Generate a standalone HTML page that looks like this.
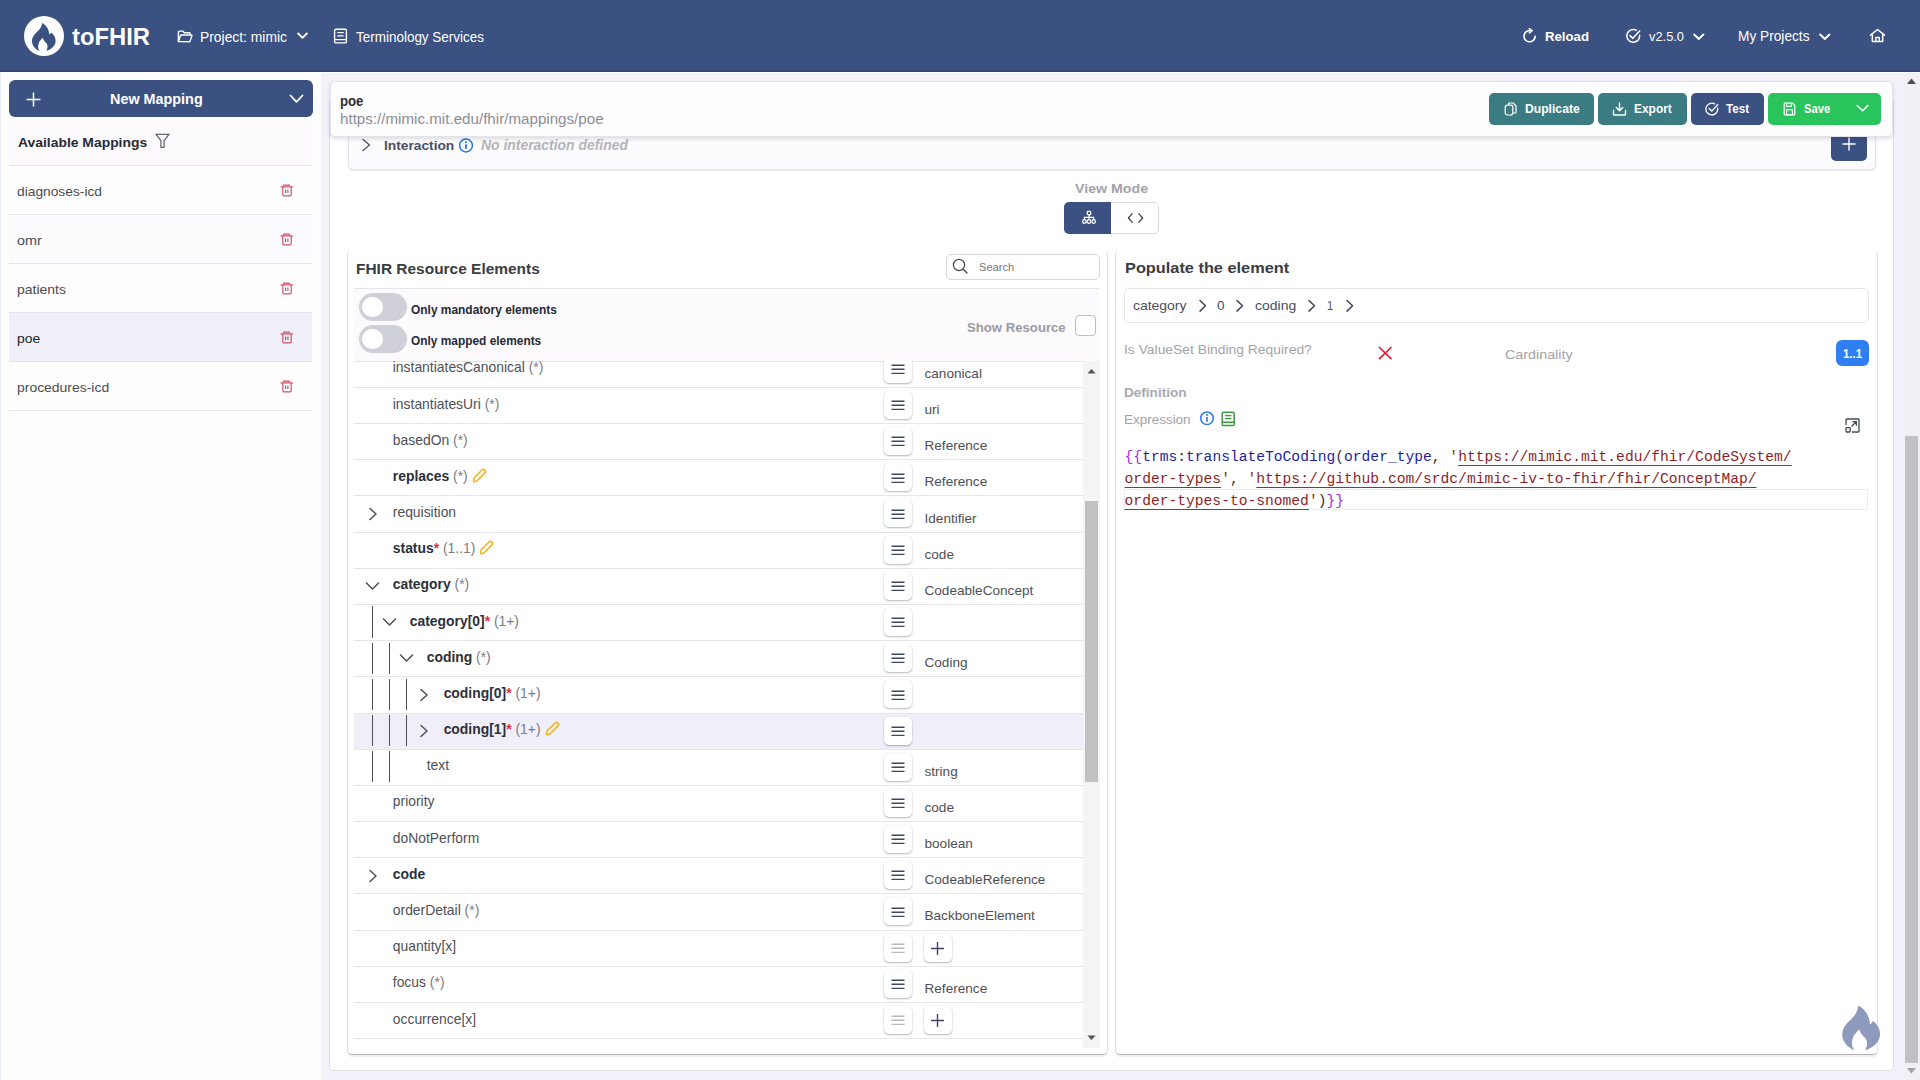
<!DOCTYPE html><html><head><meta charset="utf-8"><style>html,body{margin:0;padding:0;}body{width:1920px;height:1080px;overflow:hidden;position:relative;background:#f3f2fb;font-family:"Liberation Sans",sans-serif;}</style></head><body>
<div style="position:absolute;left:0.00px;top:0.00px;width:1920.00px;height:72.00px;background:#3a5182;box-shadow:inset 0 -1.5px 1px rgba(20,30,60,.2);z-index:5"></div>
<div style="position:absolute;left:0.00px;top:72.00px;width:1920.00px;height:1.30px;background:#fdfdfe;z-index:5"></div>
<div style="position:absolute;left:0;top:0;width:1920px;height:72px;z-index:6">
<svg style="position:absolute;left:24.00px;top:16.00px;" width="40" height="40" viewBox="0 0 40 40" fill="none"><circle cx="20" cy="20" r="20" fill="#fff"/></svg>
<svg style="position:absolute;left:20.00px;top:12.00px;" width="48" height="48" viewBox="0 0 48 48" fill="none"><path d="M22.2 10.9 C21.4 14 20.9 16 18.5 18.6 C15.5 21.5 12.2 24.2 12 28.9 C11.9 33 14.6 36.6 19.6 39.1 C18.4 37 17.9 35.6 18.2 33.2 C18.6 30 20.6 28 22.7 25.8 C23.3 28.6 25.4 30 26.8 31.8 C27.9 33.5 27.8 36.5 26.2 39.1 C31.3 37.4 35.3 34 35.6 29.6 C35.9 25.6 33.8 22.3 31.1 20.4 C30.9 21.4 30.2 22.2 29.3 22.6 C29.2 18.2 26.8 13.3 22.2 10.9 Z" fill="#3a5182"/></svg>
<div style="position:absolute;left:72.00px;top:25.72px;white-space:pre;line-height:1;font-family:'Liberation Sans', sans-serif;font-size:23.6px;font-weight:700;color:#fff;transform:scaleX(1.0087);transform-origin:0 0;">toFHIR</div>
<svg style="position:absolute;left:177.00px;top:29.50px;" width="16" height="13" viewBox="0 0 16 13" fill="none"><path d="M1.4 11.6 V1.9 Q1.4 1.1 2.2 1.1 H5.8 L7.3 2.7 H12.3 Q13.1 2.7 13.1 3.5 V5" stroke="#fff" stroke-width="1.4" stroke-linejoin="round"/><path d="M1.4 11.6 L3.5 5.6 Q3.7 5 4.4 5 H14.4 Q15.1 5 14.9 5.7 L13.1 11.1 Q12.9 11.7 12.3 11.7 Z" stroke="#fff" stroke-width="1.4" stroke-linejoin="round"/></svg>
<div style="position:absolute;left:200.00px;top:29.85px;white-space:pre;line-height:1;font-family:'Liberation Sans', sans-serif;font-size:14px;font-weight:400;color:#fff;transform:scaleX(0.9897);transform-origin:0 0;">Project: mimic</div>
<svg style="position:absolute;left:297.00px;top:32.00px;" width="11" height="8" viewBox="0 0 11 8" fill="none"><path d="M1.2 1.5 L5.5 5.8 L9.8 1.5" stroke="#fff" stroke-width="1.9" stroke-linecap="round" stroke-linejoin="round"/></svg>
<svg style="position:absolute;left:333.00px;top:28.00px;" width="15" height="16" viewBox="0 0 15 16" fill="none"><rect x="1.6" y="1.3" width="11.8" height="13.6" rx="1.2" stroke="#fff" stroke-width="1.4"/><path d="M4.3 4.6 H10.7 M4.3 7.9 H10.7 M1.6 11.6 H13.4" stroke="#fff" stroke-width="1.4"/></svg>
<div style="position:absolute;left:356.00px;top:29.85px;white-space:pre;line-height:1;font-family:'Liberation Sans', sans-serif;font-size:14px;font-weight:400;color:#fff;transform:scaleX(0.9620);transform-origin:0 0;">Terminology Services</div>
<svg style="position:absolute;left:1522.00px;top:28.00px;" width="16" height="16" viewBox="0 0 16 16" fill="none"><path d="M13.2 8.4 A5.6 5.6 0 1 1 8 2.6" stroke="#fff" stroke-width="1.6" stroke-linecap="round"/><path d="M7.2 0.6 L10.2 2.7 L7.4 5" stroke="#fff" stroke-width="1.6" stroke-linecap="round" stroke-linejoin="round"/></svg>
<div style="position:absolute;left:1545.00px;top:30.37px;white-space:pre;line-height:1;font-family:'Liberation Sans', sans-serif;font-size:13.5px;font-weight:700;color:#fff;transform:scaleX(0.9774);transform-origin:0 0;">Reload</div>
<svg style="position:absolute;left:1625.00px;top:28.00px;" width="17" height="16" viewBox="0 0 17 16" fill="none"><path d="M14.6 7.2 A6.4 6.4 0 1 1 11.3 2.2" stroke="#fff" stroke-width="1.5" stroke-linecap="round"/><path d="M5 7.6 L7.8 10.3 L14.6 3" stroke="#fff" stroke-width="1.6" stroke-linecap="round" stroke-linejoin="round"/></svg>
<div style="position:absolute;left:1649.00px;top:30.17px;white-space:pre;line-height:1;font-family:'Liberation Sans', sans-serif;font-size:13.5px;font-weight:400;color:#fff;transform:scaleX(0.9516);transform-origin:0 0;">v2.5.0</div>
<svg style="position:absolute;left:1693.00px;top:32.50px;" width="12" height="8" viewBox="0 0 12 8" fill="none"><path d="M1.2 1.5 L5.8 6 L10.4 1.5" stroke="#fff" stroke-width="1.9" stroke-linecap="round" stroke-linejoin="round"/></svg>
<div style="position:absolute;left:1738.00px;top:29.92px;white-space:pre;line-height:1;font-family:'Liberation Sans', sans-serif;font-size:13.8px;font-weight:400;color:#fff;transform:scaleX(0.9920);transform-origin:0 0;">My Projects</div>
<svg style="position:absolute;left:1819.00px;top:32.50px;" width="12" height="8" viewBox="0 0 12 8" fill="none"><path d="M1.2 1.5 L5.8 6 L10.4 1.5" stroke="#fff" stroke-width="1.9" stroke-linecap="round" stroke-linejoin="round"/></svg>
<svg style="position:absolute;left:1869.00px;top:28.00px;" width="17" height="15" viewBox="0 0 17 15" fill="none"><path d="M1.5 7.2 L8.5 1.5 L15.5 7.2" stroke="#fff" stroke-width="1.5" stroke-linecap="round" stroke-linejoin="round"/><path d="M3.3 6 V13.6 H13.7 V6" stroke="#fff" stroke-width="1.5" stroke-linejoin="round"/><path d="M6.8 13.6 V9.5 H10.2 V13.6" stroke="#fff" stroke-width="1.4"/></svg>
</div>
<div style="position:absolute;left:0.00px;top:72.00px;width:321.00px;height:1008.00px;background:#fefeff"></div>
<div style="position:absolute;left:0.00px;top:72.00px;width:1.00px;height:1008.00px;background:#e8ecf8"></div>
<div style="position:absolute;left:9.00px;top:80.30px;width:304.00px;height:36.70px;background:#3a5182;border-radius:6px"></div>
<svg style="position:absolute;left:26.00px;top:92.00px;" width="15" height="15" viewBox="0 0 15 15" fill="none"><path d="M7.5 0.5 V14.5 M0.5 7.5 H14.5" stroke="#fff" stroke-width="1.5"/></svg>
<div style="position:absolute;left:110.00px;top:92.15px;white-space:pre;line-height:1;font-family:'Liberation Sans', sans-serif;font-size:14px;font-weight:700;color:#fff;transform:scaleX(1.0273);transform-origin:0 0;">New Mapping</div>
<svg style="position:absolute;left:289.00px;top:94.00px;" width="15" height="10" viewBox="0 0 15 10" fill="none"><path d="M1.5 1.5 L7.5 7.8 L13.5 1.5" stroke="#fff" stroke-width="1.8" stroke-linecap="round" stroke-linejoin="round"/></svg>
<div style="position:absolute;left:9.00px;top:121.00px;width:304.00px;height:44.00px;background:#fcfafd"></div>
<div style="position:absolute;left:17.60px;top:135.50px;white-space:pre;line-height:1;font-family:'Liberation Sans', sans-serif;font-size:13px;font-weight:700;color:#262b36;transform:scaleX(1.0687);transform-origin:0 0;">Available Mappings</div>
<svg style="position:absolute;left:155.00px;top:133.00px;" width="15" height="16" viewBox="0 0 15 16" fill="none"><path d="M1 1.3 H14 L9.1 7.6 V14.3 H5.9 V7.6 Z" stroke="#5f616b" stroke-width="1.2" stroke-linejoin="round"/></svg>
<div style="position:absolute;left:9.00px;top:165.30px;width:303.00px;height:1.00px;background:#e4e2ea"></div>
<div style="position:absolute;left:17.30px;top:184.59px;white-space:pre;line-height:1;font-family:'Liberation Sans', sans-serif;font-size:13.6px;font-weight:400;color:#4a4a52;transform:scaleX(1.0132);transform-origin:0 0;">diagnoses-icd</div>
<svg style="position:absolute;left:280.00px;top:183.80px;" width="13" height="14" viewBox="0 0 13 14" fill="none"><path d="M3.7 2.6 V1.1 H9.3 V2.6" stroke="#cf506c" stroke-width="1.1"/><path d="M1 2.9 H12.4" stroke="#d4506b" stroke-width="1.2" stroke-linecap="round"/><path d="M2.8 3 V10.5 Q2.8 11.8 4.1 11.8 H9.9 Q11.2 11.8 11.2 10.5 V3" stroke="#d4506b" stroke-width="1.2"/><path d="M5.6 5.4 V9 M7.9 5.4 V9" stroke="#8a5a70" stroke-width="1.1"/></svg>
<div style="position:absolute;left:9.00px;top:214.30px;width:303.00px;height:49.00px;background:#fcfbfe"></div>
<div style="position:absolute;left:9.00px;top:214.30px;width:303.00px;height:1.00px;background:#e4e2ea"></div>
<div style="position:absolute;left:17.30px;top:233.59px;white-space:pre;line-height:1;font-family:'Liberation Sans', sans-serif;font-size:13.6px;font-weight:400;color:#4a4a52;transform:scaleX(1.0588);transform-origin:0 0;">omr</div>
<svg style="position:absolute;left:280.00px;top:232.80px;" width="13" height="14" viewBox="0 0 13 14" fill="none"><path d="M3.7 2.6 V1.1 H9.3 V2.6" stroke="#cf506c" stroke-width="1.1"/><path d="M1 2.9 H12.4" stroke="#d4506b" stroke-width="1.2" stroke-linecap="round"/><path d="M2.8 3 V10.5 Q2.8 11.8 4.1 11.8 H9.9 Q11.2 11.8 11.2 10.5 V3" stroke="#d4506b" stroke-width="1.2"/><path d="M5.6 5.4 V9 M7.9 5.4 V9" stroke="#8a5a70" stroke-width="1.1"/></svg>
<div style="position:absolute;left:9.00px;top:263.30px;width:303.00px;height:1.00px;background:#e4e2ea"></div>
<div style="position:absolute;left:17.30px;top:282.59px;white-space:pre;line-height:1;font-family:'Liberation Sans', sans-serif;font-size:13.6px;font-weight:400;color:#4a4a52;transform:scaleX(1.0268);transform-origin:0 0;">patients</div>
<svg style="position:absolute;left:280.00px;top:281.80px;" width="13" height="14" viewBox="0 0 13 14" fill="none"><path d="M3.7 2.6 V1.1 H9.3 V2.6" stroke="#cf506c" stroke-width="1.1"/><path d="M1 2.9 H12.4" stroke="#d4506b" stroke-width="1.2" stroke-linecap="round"/><path d="M2.8 3 V10.5 Q2.8 11.8 4.1 11.8 H9.9 Q11.2 11.8 11.2 10.5 V3" stroke="#d4506b" stroke-width="1.2"/><path d="M5.6 5.4 V9 M7.9 5.4 V9" stroke="#8a5a70" stroke-width="1.1"/></svg>
<div style="position:absolute;left:9.00px;top:312.30px;width:303.00px;height:49.00px;background:#efeef9"></div>
<div style="position:absolute;left:9.00px;top:312.30px;width:303.00px;height:1.00px;background:#e4e2ea"></div>
<div style="position:absolute;left:17.30px;top:331.59px;white-space:pre;line-height:1;font-family:'Liberation Sans', sans-serif;font-size:13.6px;font-weight:400;color:#222;transform:scaleX(1.0182);transform-origin:0 0;">poe</div>
<svg style="position:absolute;left:280.00px;top:330.80px;" width="13" height="14" viewBox="0 0 13 14" fill="none"><path d="M3.7 2.6 V1.1 H9.3 V2.6" stroke="#cf506c" stroke-width="1.1"/><path d="M1 2.9 H12.4" stroke="#d4506b" stroke-width="1.2" stroke-linecap="round"/><path d="M2.8 3 V10.5 Q2.8 11.8 4.1 11.8 H9.9 Q11.2 11.8 11.2 10.5 V3" stroke="#d4506b" stroke-width="1.2"/><path d="M5.6 5.4 V9 M7.9 5.4 V9" stroke="#8a5a70" stroke-width="1.1"/></svg>
<div style="position:absolute;left:9.00px;top:361.30px;width:303.00px;height:1.00px;background:#e4e2ea"></div>
<div style="position:absolute;left:17.30px;top:380.59px;white-space:pre;line-height:1;font-family:'Liberation Sans', sans-serif;font-size:13.6px;font-weight:400;color:#4a4a52;transform:scaleX(1.0253);transform-origin:0 0;">procedures-icd</div>
<svg style="position:absolute;left:280.00px;top:379.80px;" width="13" height="14" viewBox="0 0 13 14" fill="none"><path d="M3.7 2.6 V1.1 H9.3 V2.6" stroke="#cf506c" stroke-width="1.1"/><path d="M1 2.9 H12.4" stroke="#d4506b" stroke-width="1.2" stroke-linecap="round"/><path d="M2.8 3 V10.5 Q2.8 11.8 4.1 11.8 H9.9 Q11.2 11.8 11.2 10.5 V3" stroke="#d4506b" stroke-width="1.2"/><path d="M5.6 5.4 V9 M7.9 5.4 V9" stroke="#8a5a70" stroke-width="1.1"/></svg>
<div style="position:absolute;left:9.00px;top:410.30px;width:303.00px;height:1.00px;background:#e4e2ea"></div>
<div style="position:absolute;left:329.00px;top:100.00px;width:1564.50px;height:970.50px;background:#ffffff;border-left:1px solid #dedde5;border-right:1px solid #dedde5;border-bottom:1px solid #dedde5;border-radius:0 0 5px 5px;box-sizing:border-box"></div>
<div style="position:absolute;left:1903.00px;top:72.00px;width:17.00px;height:1008.00px;background:#f1f0f4"></div>
<svg style="position:absolute;left:1906.00px;top:77.00px;" width="11" height="8" viewBox="0 0 11 8" fill="none"><path d="M1 7 L5.5 1.5 L10 7 Z" fill="#505050"/></svg>
<div style="position:absolute;left:1905.00px;top:436.00px;width:13.00px;height:627.00px;background:#c2c0c5"></div>
<svg style="position:absolute;left:1906.00px;top:1067.00px;" width="11" height="8" viewBox="0 0 11 8" fill="none"><path d="M1 1 L5.5 6.5 L10 1 Z" fill="#a3a3a3"/></svg>
<div style="position:absolute;left:347.80px;top:120.00px;width:1528.50px;height:50.00px;background:#fcfbfe;border:1px solid #e2e0e8;border-radius:5px;box-sizing:border-box;box-shadow:0 1px 2px rgba(0,0,0,.08)"></div>
<svg style="position:absolute;left:361.00px;top:138.00px;" width="11" height="14" viewBox="0 0 11 14" fill="none"><path d="M2 1.5 L8.5 7 L2 12.5" stroke="#55596a" stroke-width="1.5" stroke-linecap="round" stroke-linejoin="round"/></svg>
<div style="position:absolute;left:383.75px;top:139.20px;white-space:pre;line-height:1;font-family:'Liberation Sans', sans-serif;font-size:13.7px;font-weight:700;color:#4b4f5e;transform:scaleX(1.0040);transform-origin:0 0;">Interaction</div>
<svg style="position:absolute;left:458.00px;top:138.00px;" width="16" height="15" viewBox="0 0 16 15" fill="none"><circle cx="8" cy="7.5" r="6.4" stroke="#1f74e0" stroke-width="1.5"/><path d="M8 6.3 V11" stroke="#1f74e0" stroke-width="1.7"/><circle cx="8" cy="4.2" r="1" fill="#1f74e0"/></svg>
<div style="position:absolute;left:481.40px;top:139.04px;white-space:pre;line-height:1;font-family:'Liberation Sans', sans-serif;font-size:13.9px;font-weight:700;color:#b4b3b9;transform:scaleX(1.0018);transform-origin:0 0;font-style:italic">No interaction defined</div>
<div style="position:absolute;left:1831.00px;top:125.00px;width:36.00px;height:35.50px;background:#3a5182;border-radius:5px"></div>
<svg style="position:absolute;left:1842.00px;top:137.00px;" width="14" height="14" viewBox="0 0 14 14" fill="none"><path d="M7 0.5 V13.5 M0.5 7 H13.5" stroke="#fff" stroke-width="1.4"/></svg>
<div style="position:absolute;left:330.00px;top:81.00px;width:1563.00px;height:55.70px;background:#fefdff;border:1px solid #e4e2ea;border-radius:5px;box-sizing:border-box;box-shadow:0 2px 4px rgba(0,0,0,.13)"></div>
<div style="position:absolute;left:339.70px;top:94.52px;white-space:pre;line-height:1;font-family:'Liberation Sans', sans-serif;font-size:13.8px;font-weight:700;color:#2c2f3a;transform:scaleX(0.9539);transform-origin:0 0;">poe</div>
<div style="position:absolute;left:339.70px;top:111.63px;white-space:pre;line-height:1;font-family:'Liberation Sans', sans-serif;font-size:14.5px;font-weight:400;color:#8d8d94;transform:scaleX(1.0450);transform-origin:0 0;">https://mimic.mit.edu/fhir/mappings/poe</div>
<div style="position:absolute;left:1489.20px;top:92.90px;width:104.70px;height:31.80px;background:#3a7c82;border-radius:5px"></div>
<svg style="position:absolute;left:1504.00px;top:102.00px;" width="13" height="14" viewBox="0 0 13 14" fill="none"><path d="M4.5 3 V1.8 Q4.5 1 5.3 1 H9 L12 4 V10.2 Q12 11 11.2 11 H9" stroke="#fff" stroke-width="1.2" stroke-linejoin="round"/><rect x="1.2" y="3.2" width="7.6" height="9.8" rx="2.2" stroke="#fff" stroke-width="1.2"/></svg>
<div style="position:absolute;left:1524.60px;top:103.20px;white-space:pre;line-height:1;font-family:'Liberation Sans', sans-serif;font-size:12.4px;font-weight:700;color:#fff;transform:scaleX(0.9806);transform-origin:0 0;">Duplicate</div>
<div style="position:absolute;left:1598.20px;top:92.90px;width:88.70px;height:31.80px;background:#3a7c82;border-radius:5px"></div>
<svg style="position:absolute;left:1612.00px;top:102.00px;" width="15" height="14" viewBox="0 0 15 14" fill="none"><path d="M7.5 1 V8.6 M4.3 5.6 L7.5 8.8 L10.7 5.6" stroke="#fff" stroke-width="1.4" stroke-linecap="round" stroke-linejoin="round"/><path d="M1.5 8.5 V12.2 Q1.5 13 2.3 13 H12.7 Q13.5 13 13.5 12.2 V8.5" stroke="#fff" stroke-width="1.4" stroke-linecap="round"/></svg>
<div style="position:absolute;left:1634.30px;top:103.20px;white-space:pre;line-height:1;font-family:'Liberation Sans', sans-serif;font-size:12.4px;font-weight:700;color:#fff;transform:scaleX(0.9631);transform-origin:0 0;">Export</div>
<div style="position:absolute;left:1691.00px;top:92.90px;width:72.80px;height:31.80px;background:#3a5182;border-radius:5px"></div>
<svg style="position:absolute;left:1705.00px;top:102.00px;" width="14" height="14" viewBox="0 0 14 14" fill="none"><path d="M12.6 6 A5.9 5.9 0 1 1 9.8 2" stroke="#fff" stroke-width="1.3" stroke-linecap="round"/><path d="M4.2 6.6 L6.8 9.1 L12.8 2.6" stroke="#fff" stroke-width="1.4" stroke-linecap="round" stroke-linejoin="round"/></svg>
<div style="position:absolute;left:1726.00px;top:103.20px;white-space:pre;line-height:1;font-family:'Liberation Sans', sans-serif;font-size:12.4px;font-weight:700;color:#fff;transform:scaleX(0.9364);transform-origin:0 0;">Test</div>
<div style="position:absolute;left:1768.20px;top:92.90px;width:112.60px;height:31.80px;background:#29c45b;border-radius:5px"></div>
<svg style="position:absolute;left:1783.00px;top:102.00px;" width="13" height="14" viewBox="0 0 13 14" fill="none"><path d="M1.2 2 Q1.2 1.2 2 1.2 H9.5 L11.8 3.5 V12 Q11.8 12.8 11 12.8 H2 Q1.2 12.8 1.2 12 Z" stroke="#fff" stroke-width="1.2" stroke-linejoin="round"/><path d="M3.6 1.4 V4.4 H8.4 V1.4" stroke="#fff" stroke-width="1.1"/><rect x="3.6" y="7.8" width="5.8" height="5" stroke="#fff" stroke-width="1.1"/></svg>
<div style="position:absolute;left:1803.70px;top:103.20px;white-space:pre;line-height:1;font-family:'Liberation Sans', sans-serif;font-size:12.4px;font-weight:700;color:#fff;transform:scaleX(0.9084);transform-origin:0 0;">Save</div>
<svg style="position:absolute;left:1856.00px;top:104.00px;" width="13" height="9" viewBox="0 0 13 9" fill="none"><path d="M1.2 1.5 L6.5 6.8 L11.8 1.5" stroke="#fff" stroke-width="1.6" stroke-linecap="round" stroke-linejoin="round"/></svg>
<div style="position:absolute;left:1075.30px;top:182.20px;white-space:pre;line-height:1;font-family:'Liberation Sans', sans-serif;font-size:13.7px;font-weight:700;color:#a3a2a8;transform:scaleX(1.0371);transform-origin:0 0;">View Mode</div>
<div style="position:absolute;left:1064.00px;top:202.00px;width:94.60px;height:31.80px;background:#fff;border:1px solid #d9d8de;border-radius:5px;box-sizing:border-box"></div>
<div style="position:absolute;left:1064.00px;top:202.00px;width:47.00px;height:31.80px;background:#3a5182;border-radius:5px 0 0 5px"></div>
<svg style="position:absolute;left:1081.00px;top:210.00px;" width="16" height="15" viewBox="0 0 16 15" fill="none"><rect x="6.3" y="1.3" width="3.4" height="3.4" rx=".9" stroke="#fff" stroke-width="1.3"/><path d="M8 4.7 V7.3 M3.4 9.6 V7.3 H12.6 V9.6 M8 7.3 V9.6" stroke="#fff" stroke-width="1.2"/><circle cx="3.4" cy="11.5" r="1.8" stroke="#fff" stroke-width="1.3"/><circle cx="8" cy="11.5" r="1.8" stroke="#fff" stroke-width="1.3"/><circle cx="12.6" cy="11.5" r="1.8" stroke="#fff" stroke-width="1.3"/></svg>
<svg style="position:absolute;left:1127.00px;top:212.00px;" width="17" height="12" viewBox="0 0 17 12" fill="none"><path d="M5.2 1.6 L1.4 6 L5.2 10.4 M11.8 1.6 L15.6 6 L11.8 10.4" stroke="#3c3f4c" stroke-width="1.25" stroke-linecap="round" stroke-linejoin="round"/></svg>
<div style="position:absolute;left:346.50px;top:249.50px;width:761.00px;height:805.30px;background:#fff;border:1px solid #e3e1e8;border-top-color:#fff;border-bottom-color:#b4b3b9;border-radius:5px;box-sizing:border-box;box-shadow:0 1.5px 1.5px rgba(0,0,0,.07)"></div>
<div style="position:absolute;left:355.60px;top:261.73px;white-space:pre;line-height:1;font-family:'Liberation Sans', sans-serif;font-size:14.5px;font-weight:700;color:#3b3c43;transform:scaleX(1.0658);transform-origin:0 0;">FHIR Resource Elements</div>
<div style="position:absolute;left:946.30px;top:254.00px;width:153.30px;height:25.50px;background:#fff;border:1px solid #d8d7de;border-radius:5px;box-sizing:border-box"></div>
<svg style="position:absolute;left:952.00px;top:258.00px;" width="17" height="17" viewBox="0 0 17 17" fill="none"><circle cx="7" cy="7" r="5.6" stroke="#4a4d58" stroke-width="1.3"/><path d="M11.2 11.2 L15 15" stroke="#4a4d58" stroke-width="1.4" stroke-linecap="round"/></svg>
<div style="position:absolute;left:978.75px;top:261.77px;white-space:pre;line-height:1;font-family:'Liberation Sans', sans-serif;font-size:11.5px;font-weight:400;color:#777780;transform:scaleX(0.9674);transform-origin:0 0;">Search</div>
<div style="position:absolute;left:354.40px;top:288.00px;width:745.00px;height:1.00px;background:#e6e4ea"></div>
<div style="position:absolute;left:354.40px;top:289.00px;width:745.00px;height:72.00px;background:#fcfafd"></div>
<div style="position:absolute;left:354.40px;top:360.50px;width:729.00px;height:1.00px;background:#e6e4ea"></div>
<div style="position:absolute;left:358.75px;top:293.10px;width:48.20px;height:27.50px;background:#cfd0d8;border-radius:14px"></div>
<div style="position:absolute;left:362.30px;top:296.70px;width:20.60px;height:20.60px;background:#fff;border-radius:50%"></div>
<div style="position:absolute;left:358.75px;top:325.00px;width:48.20px;height:27.50px;background:#cfd0d8;border-radius:14px"></div>
<div style="position:absolute;left:362.30px;top:328.60px;width:20.60px;height:20.60px;background:#fff;border-radius:50%"></div>
<div style="position:absolute;left:411.00px;top:303.67px;white-space:pre;line-height:1;font-family:'Liberation Sans', sans-serif;font-size:12.2px;font-weight:700;color:#262a35;transform:scaleX(0.9791);transform-origin:0 0;">Only mandatory elements</div>
<div style="position:absolute;left:411.00px;top:335.27px;white-space:pre;line-height:1;font-family:'Liberation Sans', sans-serif;font-size:12.2px;font-weight:700;color:#262a35;transform:scaleX(0.9761);transform-origin:0 0;">Only mapped elements</div>
<div style="position:absolute;left:966.70px;top:320.74px;white-space:pre;line-height:1;font-family:'Liberation Sans', sans-serif;font-size:13.3px;font-weight:700;color:#9b9aa2;transform:scaleX(0.9893);transform-origin:0 0;">Show Resource</div>
<div style="position:absolute;left:1075.00px;top:315.00px;width:20.50px;height:20.50px;background:#fff;border:1.5px solid #bdbcc4;border-radius:4px;box-sizing:border-box"></div>
<div style="position:absolute;left:354.4px;top:361px;width:745px;height:684px;overflow:hidden">
<div style="position:absolute;left:38.40px;top:0.44px;white-space:pre;line-height:1;font-family:'Liberation Sans', sans-serif;font-size:13.9px;font-weight:400;color:#55565e;"><span style="font-weight:400;color:#4f5057">instantiatesCanonical</span> <span style="color:#7c7c84">(*)</span></div>
<div style="position:absolute;left:529.50px;top:-6.20px;width:28.00px;height:28.00px;background:#fff;border-radius:5px;box-shadow:0 1px 2px rgba(0,0,0,.28), 0 0 1px rgba(0,0,0,.12)"></div>
<svg style="position:absolute;left:537.10px;top:3.10px;" width="14" height="10" viewBox="0 0 14 10" fill="none"><path d="M0.5 1.2 H13.5 M0.5 5.3 H13.5 M0.5 9.4 H13.5" stroke="#3f4663" stroke-width="1.5"/></svg>
<div style="position:absolute;left:570.10px;top:5.89px;white-space:pre;line-height:1;font-family:'Liberation Sans', sans-serif;font-size:13.6px;font-weight:400;color:#4f5057;">canonical</div>
<div style="position:absolute;left:0.00px;top:25.97px;width:729.00px;height:1.00px;background:#e6e5ea"></div>
<div style="position:absolute;left:38.40px;top:36.61px;white-space:pre;line-height:1;font-family:'Liberation Sans', sans-serif;font-size:13.9px;font-weight:400;color:#55565e;"><span style="font-weight:400;color:#4f5057">instantiatesUri</span> <span style="color:#7c7c84">(*)</span></div>
<div style="position:absolute;left:529.50px;top:29.97px;width:28.00px;height:28.00px;background:#fff;border-radius:5px;box-shadow:0 1px 2px rgba(0,0,0,.28), 0 0 1px rgba(0,0,0,.12)"></div>
<svg style="position:absolute;left:537.10px;top:39.27px;" width="14" height="10" viewBox="0 0 14 10" fill="none"><path d="M0.5 1.2 H13.5 M0.5 5.3 H13.5 M0.5 9.4 H13.5" stroke="#3f4663" stroke-width="1.5"/></svg>
<div style="position:absolute;left:570.10px;top:42.06px;white-space:pre;line-height:1;font-family:'Liberation Sans', sans-serif;font-size:13.6px;font-weight:400;color:#4f5057;">uri</div>
<div style="position:absolute;left:0.00px;top:62.14px;width:729.00px;height:1.00px;background:#e6e5ea"></div>
<div style="position:absolute;left:38.40px;top:72.78px;white-space:pre;line-height:1;font-family:'Liberation Sans', sans-serif;font-size:13.9px;font-weight:400;color:#55565e;"><span style="font-weight:400;color:#4f5057">basedOn</span> <span style="color:#7c7c84">(*)</span></div>
<div style="position:absolute;left:529.50px;top:66.14px;width:28.00px;height:28.00px;background:#fff;border-radius:5px;box-shadow:0 1px 2px rgba(0,0,0,.28), 0 0 1px rgba(0,0,0,.12)"></div>
<svg style="position:absolute;left:537.10px;top:75.44px;" width="14" height="10" viewBox="0 0 14 10" fill="none"><path d="M0.5 1.2 H13.5 M0.5 5.3 H13.5 M0.5 9.4 H13.5" stroke="#3f4663" stroke-width="1.5"/></svg>
<div style="position:absolute;left:570.10px;top:78.23px;white-space:pre;line-height:1;font-family:'Liberation Sans', sans-serif;font-size:13.6px;font-weight:400;color:#4f5057;">Reference</div>
<div style="position:absolute;left:0.00px;top:98.31px;width:729.00px;height:1.00px;background:#e6e5ea"></div>
<div style="position:absolute;left:38.40px;top:108.95px;white-space:pre;line-height:1;font-family:'Liberation Sans', sans-serif;font-size:13.9px;font-weight:400;color:#55565e;"><span style="font-weight:700;color:#2e3038">replaces</span> <span style="color:#7c7c84">(*)</span><span style="display:inline-block;width:19px;height:1px;position:relative"><svg width="15" height="15" viewBox="0 0 15 15" style="position:absolute;left:4px;top:-12px" fill="none"><path d="M3.2 13.6 Q1.4 13.9 1.6 12 L2.2 9.8 L10.3 1.7 Q11.3 0.8 12.3 1.7 L13.2 2.6 Q14.1 3.6 13.2 4.6 L5.1 12.7 Z" stroke="#f0b31e" stroke-width="1.6" stroke-linejoin="round"/></svg></span></div>
<div style="position:absolute;left:529.50px;top:102.31px;width:28.00px;height:28.00px;background:#fff;border-radius:5px;box-shadow:0 1px 2px rgba(0,0,0,.28), 0 0 1px rgba(0,0,0,.12)"></div>
<svg style="position:absolute;left:537.10px;top:111.61px;" width="14" height="10" viewBox="0 0 14 10" fill="none"><path d="M0.5 1.2 H13.5 M0.5 5.3 H13.5 M0.5 9.4 H13.5" stroke="#3f4663" stroke-width="1.5"/></svg>
<div style="position:absolute;left:570.10px;top:114.40px;white-space:pre;line-height:1;font-family:'Liberation Sans', sans-serif;font-size:13.6px;font-weight:400;color:#4f5057;">Reference</div>
<div style="position:absolute;left:0.00px;top:134.48px;width:729.00px;height:1.00px;background:#e6e5ea"></div>
<svg style="position:absolute;left:12.40px;top:145.98px;" width="12" height="14" viewBox="0 0 12 14" fill="none"><path d="M3 1.5 L9 7 L3 12.5" stroke="#4c4f5a" stroke-width="1.5" stroke-linecap="round" stroke-linejoin="round"/></svg>
<div style="position:absolute;left:38.40px;top:145.12px;white-space:pre;line-height:1;font-family:'Liberation Sans', sans-serif;font-size:13.9px;font-weight:400;color:#55565e;"><span style="font-weight:400;color:#4f5057">requisition</span></div>
<div style="position:absolute;left:529.50px;top:138.48px;width:28.00px;height:28.00px;background:#fff;border-radius:5px;box-shadow:0 1px 2px rgba(0,0,0,.28), 0 0 1px rgba(0,0,0,.12)"></div>
<svg style="position:absolute;left:537.10px;top:147.78px;" width="14" height="10" viewBox="0 0 14 10" fill="none"><path d="M0.5 1.2 H13.5 M0.5 5.3 H13.5 M0.5 9.4 H13.5" stroke="#3f4663" stroke-width="1.5"/></svg>
<div style="position:absolute;left:570.10px;top:150.57px;white-space:pre;line-height:1;font-family:'Liberation Sans', sans-serif;font-size:13.6px;font-weight:400;color:#4f5057;">Identifier</div>
<div style="position:absolute;left:0.00px;top:170.65px;width:729.00px;height:1.00px;background:#e6e5ea"></div>
<div style="position:absolute;left:38.40px;top:181.29px;white-space:pre;line-height:1;font-family:'Liberation Sans', sans-serif;font-size:13.9px;font-weight:400;color:#55565e;"><span style="font-weight:700;color:#2e3038">status</span><span style="color:#d9304c;font-weight:700">*</span> <span style="color:#7c7c84">(1..1)</span><span style="display:inline-block;width:19px;height:1px;position:relative"><svg width="15" height="15" viewBox="0 0 15 15" style="position:absolute;left:4px;top:-12px" fill="none"><path d="M3.2 13.6 Q1.4 13.9 1.6 12 L2.2 9.8 L10.3 1.7 Q11.3 0.8 12.3 1.7 L13.2 2.6 Q14.1 3.6 13.2 4.6 L5.1 12.7 Z" stroke="#f0b31e" stroke-width="1.6" stroke-linejoin="round"/></svg></span></div>
<div style="position:absolute;left:529.50px;top:174.65px;width:28.00px;height:28.00px;background:#fff;border-radius:5px;box-shadow:0 1px 2px rgba(0,0,0,.28), 0 0 1px rgba(0,0,0,.12)"></div>
<svg style="position:absolute;left:537.10px;top:183.95px;" width="14" height="10" viewBox="0 0 14 10" fill="none"><path d="M0.5 1.2 H13.5 M0.5 5.3 H13.5 M0.5 9.4 H13.5" stroke="#3f4663" stroke-width="1.5"/></svg>
<div style="position:absolute;left:570.10px;top:186.74px;white-space:pre;line-height:1;font-family:'Liberation Sans', sans-serif;font-size:13.6px;font-weight:400;color:#4f5057;">code</div>
<div style="position:absolute;left:0.00px;top:206.82px;width:729.00px;height:1.00px;background:#e6e5ea"></div>
<svg style="position:absolute;left:10.40px;top:219.62px;" width="16" height="10" viewBox="0 0 16 10" fill="none"><path d="M1.5 2 L7.5 8 L13.5 2" stroke="#4c4f5a" stroke-width="1.5" stroke-linecap="round" stroke-linejoin="round"/></svg>
<div style="position:absolute;left:38.40px;top:217.46px;white-space:pre;line-height:1;font-family:'Liberation Sans', sans-serif;font-size:13.9px;font-weight:400;color:#55565e;"><span style="font-weight:700;color:#2e3038">category</span> <span style="color:#7c7c84">(*)</span></div>
<div style="position:absolute;left:529.50px;top:210.82px;width:28.00px;height:28.00px;background:#fff;border-radius:5px;box-shadow:0 1px 2px rgba(0,0,0,.28), 0 0 1px rgba(0,0,0,.12)"></div>
<svg style="position:absolute;left:537.10px;top:220.12px;" width="14" height="10" viewBox="0 0 14 10" fill="none"><path d="M0.5 1.2 H13.5 M0.5 5.3 H13.5 M0.5 9.4 H13.5" stroke="#3f4663" stroke-width="1.5"/></svg>
<div style="position:absolute;left:570.10px;top:222.91px;white-space:pre;line-height:1;font-family:'Liberation Sans', sans-serif;font-size:13.6px;font-weight:400;color:#4f5057;">CodeableConcept</div>
<div style="position:absolute;left:0.00px;top:242.99px;width:729.00px;height:1.00px;background:#e6e5ea"></div>
<div style="position:absolute;left:17.20px;top:245.49px;width:1.50px;height:31.17px;background:#4f5157"></div>
<svg style="position:absolute;left:27.35px;top:255.79px;" width="16" height="10" viewBox="0 0 16 10" fill="none"><path d="M1.5 2 L7.5 8 L13.5 2" stroke="#4c4f5a" stroke-width="1.5" stroke-linecap="round" stroke-linejoin="round"/></svg>
<div style="position:absolute;left:55.35px;top:253.63px;white-space:pre;line-height:1;font-family:'Liberation Sans', sans-serif;font-size:13.9px;font-weight:400;color:#55565e;"><span style="font-weight:700;color:#2e3038">category[0]</span><span style="color:#d9304c;font-weight:700">*</span> <span style="color:#7c7c84">(1+)</span></div>
<div style="position:absolute;left:529.50px;top:246.99px;width:28.00px;height:28.00px;background:#fff;border-radius:5px;box-shadow:0 1px 2px rgba(0,0,0,.28), 0 0 1px rgba(0,0,0,.12)"></div>
<svg style="position:absolute;left:537.10px;top:256.29px;" width="14" height="10" viewBox="0 0 14 10" fill="none"><path d="M0.5 1.2 H13.5 M0.5 5.3 H13.5 M0.5 9.4 H13.5" stroke="#3f4663" stroke-width="1.5"/></svg>
<div style="position:absolute;left:0.00px;top:279.16px;width:729.00px;height:1.00px;background:#e6e5ea"></div>
<div style="position:absolute;left:17.20px;top:281.66px;width:1.50px;height:31.17px;background:#4f5157"></div>
<div style="position:absolute;left:34.40px;top:281.66px;width:1.50px;height:31.17px;background:#4f5157"></div>
<svg style="position:absolute;left:44.30px;top:291.96px;" width="16" height="10" viewBox="0 0 16 10" fill="none"><path d="M1.5 2 L7.5 8 L13.5 2" stroke="#4c4f5a" stroke-width="1.5" stroke-linecap="round" stroke-linejoin="round"/></svg>
<div style="position:absolute;left:72.30px;top:289.80px;white-space:pre;line-height:1;font-family:'Liberation Sans', sans-serif;font-size:13.9px;font-weight:400;color:#55565e;"><span style="font-weight:700;color:#2e3038">coding</span> <span style="color:#7c7c84">(*)</span></div>
<div style="position:absolute;left:529.50px;top:283.16px;width:28.00px;height:28.00px;background:#fff;border-radius:5px;box-shadow:0 1px 2px rgba(0,0,0,.28), 0 0 1px rgba(0,0,0,.12)"></div>
<svg style="position:absolute;left:537.10px;top:292.46px;" width="14" height="10" viewBox="0 0 14 10" fill="none"><path d="M0.5 1.2 H13.5 M0.5 5.3 H13.5 M0.5 9.4 H13.5" stroke="#3f4663" stroke-width="1.5"/></svg>
<div style="position:absolute;left:570.10px;top:295.25px;white-space:pre;line-height:1;font-family:'Liberation Sans', sans-serif;font-size:13.6px;font-weight:400;color:#4f5057;">Coding</div>
<div style="position:absolute;left:0.00px;top:315.33px;width:729.00px;height:1.00px;background:#e6e5ea"></div>
<div style="position:absolute;left:17.20px;top:317.83px;width:1.50px;height:31.17px;background:#4f5157"></div>
<div style="position:absolute;left:34.40px;top:317.83px;width:1.50px;height:31.17px;background:#4f5157"></div>
<div style="position:absolute;left:51.60px;top:317.83px;width:1.50px;height:31.17px;background:#4f5157"></div>
<svg style="position:absolute;left:63.25px;top:326.83px;" width="12" height="14" viewBox="0 0 12 14" fill="none"><path d="M3 1.5 L9 7 L3 12.5" stroke="#4c4f5a" stroke-width="1.5" stroke-linecap="round" stroke-linejoin="round"/></svg>
<div style="position:absolute;left:89.25px;top:325.97px;white-space:pre;line-height:1;font-family:'Liberation Sans', sans-serif;font-size:13.9px;font-weight:400;color:#55565e;"><span style="font-weight:700;color:#2e3038">coding[0]</span><span style="color:#d9304c;font-weight:700">*</span> <span style="color:#7c7c84">(1+)</span></div>
<div style="position:absolute;left:529.50px;top:319.33px;width:28.00px;height:28.00px;background:#fff;border-radius:5px;box-shadow:0 1px 2px rgba(0,0,0,.28), 0 0 1px rgba(0,0,0,.12)"></div>
<svg style="position:absolute;left:537.10px;top:328.63px;" width="14" height="10" viewBox="0 0 14 10" fill="none"><path d="M0.5 1.2 H13.5 M0.5 5.3 H13.5 M0.5 9.4 H13.5" stroke="#3f4663" stroke-width="1.5"/></svg>
<div style="position:absolute;left:0.00px;top:352.50px;width:729.00px;height:35.17px;background:#efeef9"></div>
<div style="position:absolute;left:0.00px;top:351.50px;width:729.00px;height:1.00px;background:#e6e5ea"></div>
<div style="position:absolute;left:17.20px;top:354.00px;width:1.50px;height:31.17px;background:#4f5157"></div>
<div style="position:absolute;left:34.40px;top:354.00px;width:1.50px;height:31.17px;background:#4f5157"></div>
<div style="position:absolute;left:51.60px;top:354.00px;width:1.50px;height:31.17px;background:#4f5157"></div>
<svg style="position:absolute;left:63.25px;top:363.00px;" width="12" height="14" viewBox="0 0 12 14" fill="none"><path d="M3 1.5 L9 7 L3 12.5" stroke="#4c4f5a" stroke-width="1.5" stroke-linecap="round" stroke-linejoin="round"/></svg>
<div style="position:absolute;left:89.25px;top:362.14px;white-space:pre;line-height:1;font-family:'Liberation Sans', sans-serif;font-size:13.9px;font-weight:400;color:#55565e;"><span style="font-weight:700;color:#2e3038">coding[1]</span><span style="color:#d9304c;font-weight:700">*</span> <span style="color:#7c7c84">(1+)</span><span style="display:inline-block;width:19px;height:1px;position:relative"><svg width="15" height="15" viewBox="0 0 15 15" style="position:absolute;left:4px;top:-12px" fill="none"><path d="M3.2 13.6 Q1.4 13.9 1.6 12 L2.2 9.8 L10.3 1.7 Q11.3 0.8 12.3 1.7 L13.2 2.6 Q14.1 3.6 13.2 4.6 L5.1 12.7 Z" stroke="#f0b31e" stroke-width="1.6" stroke-linejoin="round"/></svg></span></div>
<div style="position:absolute;left:529.50px;top:355.50px;width:28.00px;height:28.00px;background:#fff;border-radius:5px;box-shadow:0 1px 2px rgba(0,0,0,.28), 0 0 1px rgba(0,0,0,.12)"></div>
<svg style="position:absolute;left:537.10px;top:364.80px;" width="14" height="10" viewBox="0 0 14 10" fill="none"><path d="M0.5 1.2 H13.5 M0.5 5.3 H13.5 M0.5 9.4 H13.5" stroke="#3f4663" stroke-width="1.5"/></svg>
<div style="position:absolute;left:0.00px;top:387.67px;width:729.00px;height:1.00px;background:#e6e5ea"></div>
<div style="position:absolute;left:17.20px;top:390.17px;width:1.50px;height:31.17px;background:#4f5157"></div>
<div style="position:absolute;left:34.40px;top:390.17px;width:1.50px;height:31.17px;background:#4f5157"></div>
<div style="position:absolute;left:72.30px;top:398.31px;white-space:pre;line-height:1;font-family:'Liberation Sans', sans-serif;font-size:13.9px;font-weight:400;color:#55565e;"><span style="font-weight:400;color:#4f5057">text</span></div>
<div style="position:absolute;left:529.50px;top:391.67px;width:28.00px;height:28.00px;background:#fff;border-radius:5px;box-shadow:0 1px 2px rgba(0,0,0,.28), 0 0 1px rgba(0,0,0,.12)"></div>
<svg style="position:absolute;left:537.10px;top:400.97px;" width="14" height="10" viewBox="0 0 14 10" fill="none"><path d="M0.5 1.2 H13.5 M0.5 5.3 H13.5 M0.5 9.4 H13.5" stroke="#3f4663" stroke-width="1.5"/></svg>
<div style="position:absolute;left:570.10px;top:403.76px;white-space:pre;line-height:1;font-family:'Liberation Sans', sans-serif;font-size:13.6px;font-weight:400;color:#4f5057;">string</div>
<div style="position:absolute;left:0.00px;top:423.84px;width:729.00px;height:1.00px;background:#e6e5ea"></div>
<div style="position:absolute;left:38.40px;top:434.48px;white-space:pre;line-height:1;font-family:'Liberation Sans', sans-serif;font-size:13.9px;font-weight:400;color:#55565e;"><span style="font-weight:400;color:#4f5057">priority</span></div>
<div style="position:absolute;left:529.50px;top:427.84px;width:28.00px;height:28.00px;background:#fff;border-radius:5px;box-shadow:0 1px 2px rgba(0,0,0,.28), 0 0 1px rgba(0,0,0,.12)"></div>
<svg style="position:absolute;left:537.10px;top:437.14px;" width="14" height="10" viewBox="0 0 14 10" fill="none"><path d="M0.5 1.2 H13.5 M0.5 5.3 H13.5 M0.5 9.4 H13.5" stroke="#3f4663" stroke-width="1.5"/></svg>
<div style="position:absolute;left:570.10px;top:439.93px;white-space:pre;line-height:1;font-family:'Liberation Sans', sans-serif;font-size:13.6px;font-weight:400;color:#4f5057;">code</div>
<div style="position:absolute;left:0.00px;top:460.01px;width:729.00px;height:1.00px;background:#e6e5ea"></div>
<div style="position:absolute;left:38.40px;top:470.65px;white-space:pre;line-height:1;font-family:'Liberation Sans', sans-serif;font-size:13.9px;font-weight:400;color:#55565e;"><span style="font-weight:400;color:#4f5057">doNotPerform</span></div>
<div style="position:absolute;left:529.50px;top:464.01px;width:28.00px;height:28.00px;background:#fff;border-radius:5px;box-shadow:0 1px 2px rgba(0,0,0,.28), 0 0 1px rgba(0,0,0,.12)"></div>
<svg style="position:absolute;left:537.10px;top:473.31px;" width="14" height="10" viewBox="0 0 14 10" fill="none"><path d="M0.5 1.2 H13.5 M0.5 5.3 H13.5 M0.5 9.4 H13.5" stroke="#3f4663" stroke-width="1.5"/></svg>
<div style="position:absolute;left:570.10px;top:476.10px;white-space:pre;line-height:1;font-family:'Liberation Sans', sans-serif;font-size:13.6px;font-weight:400;color:#4f5057;">boolean</div>
<div style="position:absolute;left:0.00px;top:496.18px;width:729.00px;height:1.00px;background:#e6e5ea"></div>
<svg style="position:absolute;left:12.40px;top:507.68px;" width="12" height="14" viewBox="0 0 12 14" fill="none"><path d="M3 1.5 L9 7 L3 12.5" stroke="#4c4f5a" stroke-width="1.5" stroke-linecap="round" stroke-linejoin="round"/></svg>
<div style="position:absolute;left:38.40px;top:506.82px;white-space:pre;line-height:1;font-family:'Liberation Sans', sans-serif;font-size:13.9px;font-weight:400;color:#55565e;"><span style="font-weight:700;color:#2e3038">code</span></div>
<div style="position:absolute;left:529.50px;top:500.18px;width:28.00px;height:28.00px;background:#fff;border-radius:5px;box-shadow:0 1px 2px rgba(0,0,0,.28), 0 0 1px rgba(0,0,0,.12)"></div>
<svg style="position:absolute;left:537.10px;top:509.48px;" width="14" height="10" viewBox="0 0 14 10" fill="none"><path d="M0.5 1.2 H13.5 M0.5 5.3 H13.5 M0.5 9.4 H13.5" stroke="#3f4663" stroke-width="1.5"/></svg>
<div style="position:absolute;left:570.10px;top:512.27px;white-space:pre;line-height:1;font-family:'Liberation Sans', sans-serif;font-size:13.6px;font-weight:400;color:#4f5057;">CodeableReference</div>
<div style="position:absolute;left:0.00px;top:532.35px;width:729.00px;height:1.00px;background:#e6e5ea"></div>
<div style="position:absolute;left:38.40px;top:542.99px;white-space:pre;line-height:1;font-family:'Liberation Sans', sans-serif;font-size:13.9px;font-weight:400;color:#55565e;"><span style="font-weight:400;color:#4f5057">orderDetail</span> <span style="color:#7c7c84">(*)</span></div>
<div style="position:absolute;left:529.50px;top:536.35px;width:28.00px;height:28.00px;background:#fff;border-radius:5px;box-shadow:0 1px 2px rgba(0,0,0,.28), 0 0 1px rgba(0,0,0,.12)"></div>
<svg style="position:absolute;left:537.10px;top:545.65px;" width="14" height="10" viewBox="0 0 14 10" fill="none"><path d="M0.5 1.2 H13.5 M0.5 5.3 H13.5 M0.5 9.4 H13.5" stroke="#3f4663" stroke-width="1.5"/></svg>
<div style="position:absolute;left:570.10px;top:548.44px;white-space:pre;line-height:1;font-family:'Liberation Sans', sans-serif;font-size:13.6px;font-weight:400;color:#4f5057;">BackboneElement</div>
<div style="position:absolute;left:0.00px;top:568.52px;width:729.00px;height:1.00px;background:#e6e5ea"></div>
<div style="position:absolute;left:38.40px;top:579.16px;white-space:pre;line-height:1;font-family:'Liberation Sans', sans-serif;font-size:13.9px;font-weight:400;color:#55565e;"><span style="font-weight:400;color:#4f5057">quantity[x]</span></div>
<div style="position:absolute;left:529.50px;top:572.52px;width:28.00px;height:28.00px;background:#fff;border-radius:5px;box-shadow:0 1px 2px rgba(0,0,0,.28), 0 0 1px rgba(0,0,0,.12)"></div>
<svg style="position:absolute;left:537.10px;top:581.82px;" width="14" height="10" viewBox="0 0 14 10" fill="none"><path d="M0.5 1.2 H13.5 M0.5 5.3 H13.5 M0.5 9.4 H13.5" stroke="#b9b9c0" stroke-width="1.5"/></svg>
<div style="position:absolute;left:569.60px;top:572.82px;width:28.00px;height:28.00px;background:#fff;border-radius:5px;box-shadow:0 1px 2px rgba(0,0,0,.28), 0 0 1px rgba(0,0,0,.12)"></div>
<svg style="position:absolute;left:576.10px;top:579.52px;" width="15" height="15" viewBox="0 0 15 15" fill="none"><path d="M7.5 1 V14 M1 7.5 H14" stroke="#3f4663" stroke-width="1.4"/></svg>
<div style="position:absolute;left:0.00px;top:604.69px;width:729.00px;height:1.00px;background:#e6e5ea"></div>
<div style="position:absolute;left:38.40px;top:615.33px;white-space:pre;line-height:1;font-family:'Liberation Sans', sans-serif;font-size:13.9px;font-weight:400;color:#55565e;"><span style="font-weight:400;color:#4f5057">focus</span> <span style="color:#7c7c84">(*)</span></div>
<div style="position:absolute;left:529.50px;top:608.69px;width:28.00px;height:28.00px;background:#fff;border-radius:5px;box-shadow:0 1px 2px rgba(0,0,0,.28), 0 0 1px rgba(0,0,0,.12)"></div>
<svg style="position:absolute;left:537.10px;top:617.99px;" width="14" height="10" viewBox="0 0 14 10" fill="none"><path d="M0.5 1.2 H13.5 M0.5 5.3 H13.5 M0.5 9.4 H13.5" stroke="#3f4663" stroke-width="1.5"/></svg>
<div style="position:absolute;left:570.10px;top:620.78px;white-space:pre;line-height:1;font-family:'Liberation Sans', sans-serif;font-size:13.6px;font-weight:400;color:#4f5057;">Reference</div>
<div style="position:absolute;left:0.00px;top:640.86px;width:729.00px;height:1.00px;background:#e6e5ea"></div>
<div style="position:absolute;left:38.40px;top:651.50px;white-space:pre;line-height:1;font-family:'Liberation Sans', sans-serif;font-size:13.9px;font-weight:400;color:#55565e;"><span style="font-weight:400;color:#4f5057">occurrence[x]</span></div>
<div style="position:absolute;left:529.50px;top:644.86px;width:28.00px;height:28.00px;background:#fff;border-radius:5px;box-shadow:0 1px 2px rgba(0,0,0,.28), 0 0 1px rgba(0,0,0,.12)"></div>
<svg style="position:absolute;left:537.10px;top:654.16px;" width="14" height="10" viewBox="0 0 14 10" fill="none"><path d="M0.5 1.2 H13.5 M0.5 5.3 H13.5 M0.5 9.4 H13.5" stroke="#b9b9c0" stroke-width="1.5"/></svg>
<div style="position:absolute;left:569.60px;top:645.16px;width:28.00px;height:28.00px;background:#fff;border-radius:5px;box-shadow:0 1px 2px rgba(0,0,0,.28), 0 0 1px rgba(0,0,0,.12)"></div>
<svg style="position:absolute;left:576.10px;top:651.86px;" width="15" height="15" viewBox="0 0 15 15" fill="none"><path d="M7.5 1 V14 M1 7.5 H14" stroke="#3f4663" stroke-width="1.4"/></svg>
<div style="position:absolute;left:0.00px;top:677.03px;width:729.00px;height:1.00px;background:#e6e5ea"></div>
</div>
<div style="position:absolute;left:1083.40px;top:361.00px;width:16.20px;height:687.00px;background:#f4f4f6"></div>
<svg style="position:absolute;left:1086.00px;top:367.00px;" width="11" height="8" viewBox="0 0 11 8" fill="none"><path d="M1.5 6.5 L5.5 2 L9.5 6.5 Z" fill="#505050"/></svg>
<div style="position:absolute;left:1085.00px;top:501.00px;width:12.70px;height:281.00px;background:#c1c1c4"></div>
<svg style="position:absolute;left:1086.00px;top:1034.00px;" width="11" height="8" viewBox="0 0 11 8" fill="none"><path d="M1.5 1.5 L5.5 6 L9.5 1.5 Z" fill="#505050"/></svg>
<div style="position:absolute;left:1115.20px;top:249.50px;width:762.40px;height:805.30px;background:#fff;border:1px solid #e3e1e8;border-top-color:#fff;border-bottom-color:#b4b3b9;border-radius:5px;box-sizing:border-box;box-shadow:0 1.5px 1.5px rgba(0,0,0,.07)"></div>
<div style="position:absolute;left:1124.60px;top:261.22px;white-space:pre;line-height:1;font-family:'Liberation Sans', sans-serif;font-size:14.8px;font-weight:700;color:#3b3c43;transform:scaleX(1.1030);transform-origin:0 0;">Populate the element</div>
<div style="position:absolute;left:1124.20px;top:287.50px;width:744.60px;height:35.80px;background:#fff;border:1px solid #e4e3ea;border-radius:5px;box-sizing:border-box"></div>
<div style="position:absolute;left:1133.30px;top:299.29px;white-space:pre;line-height:1;font-family:'Liberation Sans', sans-serif;font-size:13.6px;font-weight:400;color:#4a4e62;transform:scaleX(1.0242);transform-origin:0 0;">category</div>
<svg style="position:absolute;left:1197.50px;top:299.20px;" width="10" height="14" viewBox="0 0 10 14" fill="none"><path d="M2 1.5 L7.5 6.8 L2 12.1" stroke="#3f4252" stroke-width="1.5" stroke-linecap="round" stroke-linejoin="round"/></svg>
<div style="position:absolute;left:1216.70px;top:299.29px;white-space:pre;line-height:1;font-family:'Liberation Sans', sans-serif;font-size:13.6px;font-weight:400;color:#4a4e62;transform:scaleX(0.9917);transform-origin:0 0;">0</div>
<svg style="position:absolute;left:1235.00px;top:299.20px;" width="10" height="14" viewBox="0 0 10 14" fill="none"><path d="M2 1.5 L7.5 6.8 L2 12.1" stroke="#3f4252" stroke-width="1.5" stroke-linecap="round" stroke-linejoin="round"/></svg>
<div style="position:absolute;left:1254.80px;top:299.29px;white-space:pre;line-height:1;font-family:'Liberation Sans', sans-serif;font-size:13.6px;font-weight:400;color:#4a4e62;transform:scaleX(1.0284);transform-origin:0 0;">coding</div>
<svg style="position:absolute;left:1307.00px;top:299.20px;" width="10" height="14" viewBox="0 0 10 14" fill="none"><path d="M2 1.5 L7.5 6.8 L2 12.1" stroke="#3f4252" stroke-width="1.5" stroke-linecap="round" stroke-linejoin="round"/></svg>
<div style="position:absolute;left:1327.20px;top:299.29px;white-space:pre;line-height:1;font-family:'Liberation Sans', sans-serif;font-size:13.6px;font-weight:400;color:#4a4e62;transform:scaleX(0.8066);transform-origin:0 0;">1</div>
<svg style="position:absolute;left:1344.80px;top:299.20px;" width="10" height="14" viewBox="0 0 10 14" fill="none"><path d="M2 1.5 L7.5 6.8 L2 12.1" stroke="#3f4252" stroke-width="1.5" stroke-linecap="round" stroke-linejoin="round"/></svg>
<div style="position:absolute;left:1124.20px;top:343.49px;white-space:pre;line-height:1;font-family:'Liberation Sans', sans-serif;font-size:13.6px;font-weight:400;color:#a3a3a9;transform:scaleX(1.0199);transform-origin:0 0;">Is ValueSet Binding Required?</div>
<svg style="position:absolute;left:1378.00px;top:345.50px;" width="15" height="14" viewBox="0 0 15 14" fill="none"><path d="M1.5 1.5 L13 12.6 M13 1.5 L1.5 12.6" stroke="#e21b36" stroke-width="1.7" stroke-linecap="round"/></svg>
<div style="position:absolute;left:1504.70px;top:348.09px;white-space:pre;line-height:1;font-family:'Liberation Sans', sans-serif;font-size:13.6px;font-weight:400;color:#a3a3a9;transform:scaleX(1.0527);transform-origin:0 0;">Cardinality</div>
<div style="position:absolute;left:1835.90px;top:340.10px;width:33.00px;height:25.70px;background:#2f7ff2;border-radius:6px"></div>
<div style="position:absolute;left:1843.00px;top:347.84px;white-space:pre;line-height:1;font-family:'Liberation Sans', sans-serif;font-size:12px;font-weight:700;color:#fff;transform:scaleX(0.9493);transform-origin:0 0;">1..1</div>
<div style="position:absolute;left:1124.20px;top:385.79px;white-space:pre;line-height:1;font-family:'Liberation Sans', sans-serif;font-size:13.6px;font-weight:700;color:#a9a9ae;transform:scaleX(0.9970);transform-origin:0 0;">Definition</div>
<div style="position:absolute;left:1124.20px;top:412.89px;white-space:pre;line-height:1;font-family:'Liberation Sans', sans-serif;font-size:13.6px;font-weight:400;color:#a3a3a9;transform:scaleX(0.9903);transform-origin:0 0;">Expression</div>
<svg style="position:absolute;left:1198.50px;top:411.00px;" width="16" height="15" viewBox="0 0 16 15" fill="none"><circle cx="8" cy="7.3" r="6.3" stroke="#2c7de6" stroke-width="1.5"/><path d="M8 6 V10.8" stroke="#2c7de6" stroke-width="1.7"/><circle cx="8" cy="3.9" r="1" fill="#2c7de6"/></svg>
<svg style="position:absolute;left:1221.00px;top:410.50px;" width="15" height="16" viewBox="0 0 15 16" fill="none"><rect x="1.2" y="1.2" width="12" height="13.4" rx="1.4" stroke="#3d9a43" stroke-width="1.5"/><path d="M4 4.6 H10.5 M4 7.6 H10.5 M1.2 11.2 H13.2" stroke="#3d9a43" stroke-width="1.4"/></svg>
<svg style="position:absolute;left:1845.30px;top:417.50px;" width="15" height="15" viewBox="0 0 15 15" fill="none"><path d="M1 7 V1.8 Q1 1 1.8 1 H13.2 Q14 1 14 1.8 V13.2 Q14 14 13.2 14 H7" stroke="#464955" stroke-width="1.3"/><rect x="1" y="9.6" width="4.2" height="4.4" rx=".7" stroke="#464955" stroke-width="1.3"/><path d="M7 8 L11.2 3.8 M7.8 3.6 H11.4 V7.2" stroke="#464955" stroke-width="1.3" stroke-linecap="round" stroke-linejoin="round"/></svg>
<div style="position:absolute;left:1124.00px;top:489.40px;width:744.30px;height:21.00px;border:1px solid #ececef;box-sizing:border-box"></div>
<div style="position:absolute;left:1124.60px;top:450.04px;white-space:pre;line-height:1;font-family:'Liberation Mono', monospace;font-size:14.63px;font-weight:400;color:#333;"><span style="color:#a32bd6;">{{</span><span style="color:#1c1f9e;">trms</span><span style="color:#333;">:</span><span style="color:#1c1f9e;">translateToCoding</span><span style="color:#333;">(</span><span style="color:#1c1f9e;">order_type</span><span style="color:#333;">, </span><span style="color:#8b1f2a;">'</span><span style="color:#8b1f2a;text-decoration:underline;text-decoration-color:#b0213a;text-underline-offset:4px;text-decoration-thickness:1px">https://mimic.mit.edu/fhir/CodeSystem/</span></div>
<div style="position:absolute;left:1124.60px;top:471.89px;white-space:pre;line-height:1;font-family:'Liberation Mono', monospace;font-size:14.63px;font-weight:400;color:#333;"><span style="color:#8b1f2a;text-decoration:underline;text-decoration-color:#b0213a;text-underline-offset:4px;text-decoration-thickness:1px">order-types</span><span style="color:#8b1f2a;">'</span><span style="color:#333;">, </span><span style="color:#8b1f2a;">'</span><span style="color:#8b1f2a;text-decoration:underline;text-decoration-color:#b0213a;text-underline-offset:4px;text-decoration-thickness:1px">https://github.com/srdc/mimic-iv-to-fhir/fhir/ConceptMap/</span></div>
<div style="position:absolute;left:1124.60px;top:493.79px;white-space:pre;line-height:1;font-family:'Liberation Mono', monospace;font-size:14.63px;font-weight:400;color:#333;"><span style="color:#8b1f2a;text-decoration:underline;text-decoration-color:#b0213a;text-underline-offset:4px;text-decoration-thickness:1px">order-types-to-snomed</span><span style="color:#8b1f2a;">'</span><span style="color:#333;">)</span><span style="color:#a32bd6;">}}</span></div>
<svg style="position:absolute;left:1823.40px;top:987.60px;" width="80" height="80" viewBox="0 0 50 50" fill="none"><path d="M22.2 10.9 C21.4 14 20.9 16 18.5 18.6 C15.5 21.5 12.2 24.2 12 28.9 C11.9 33 14.6 36.6 19.6 39.1 C18.4 37 17.9 35.6 18.2 33.2 C18.6 30 20.6 28 22.7 25.8 C23.3 28.6 25.4 30 26.8 31.8 C27.9 33.5 27.8 36.5 26.2 39.1 C31.3 37.4 35.3 34 35.6 29.6 C35.9 25.6 33.8 22.3 31.1 20.4 C30.9 21.4 30.2 22.2 29.3 22.6 C29.2 18.2 26.8 13.3 22.2 10.9 Z" fill="#8e9abd"/></svg>
</body></html>
